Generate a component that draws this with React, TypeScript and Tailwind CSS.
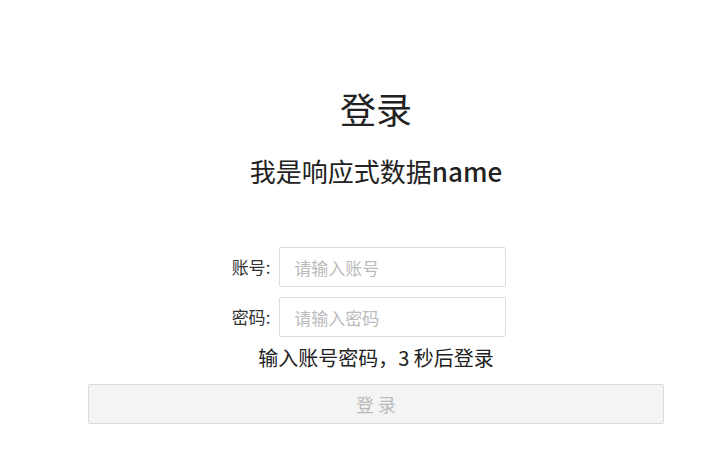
const font = "font-['Microsoft_YaHei','Noto_Sans_CJK_SC','Noto_Sans',sans-serif]";

const Field = ({ label, placeholder, type }: { label: string; placeholder: string; type: string }) => (
  <div className="flex items-center mr-[14px]">
    <label className="text-[17px] text-[#333] mr-[9px]">{label}:</label>
    <input
      type={type}
      placeholder={placeholder}
      className="w-[227px] h-[40px] px-[14px] border border-[#dcdcdc] rounded-[2px] text-[17px] outline-none placeholder:text-[#bbb]"
    />
  </div>
);

const App = () => {
  return (
    <div className={`${font} min-h-screen bg-white pl-[35px] flex flex-col items-center text-[#333]`}>
      <h1 className="mt-[84px] text-[36px] leading-[48px] text-[#222]">登录</h1>
      <h2 className="mt-[21px] text-[26px] leading-[36px] text-[#222]">
        我是响应式数据<span className="font-medium">name</span>
      </h2>

      <form className="mt-[58px] flex flex-col items-center gap-[10px]">
        <Field label="账号" placeholder="请输入账号" type="text" />
        <Field label="密码" placeholder="请输入密码" type="password" />
      </form>

      <p className="mt-[7px] text-[20px] leading-[28px] text-[#222]">输入账号密码，3 秒后登录</p>

      <button
        type="button"
        disabled
        className="mt-[12px] w-[576px] h-[40px] bg-[#f4f4f4] border border-[#d9d9d9] rounded-[2px] text-[18px] text-[#bbb]"
      >
        登 录
      </button>
    </div>
  );
};

export default App;
